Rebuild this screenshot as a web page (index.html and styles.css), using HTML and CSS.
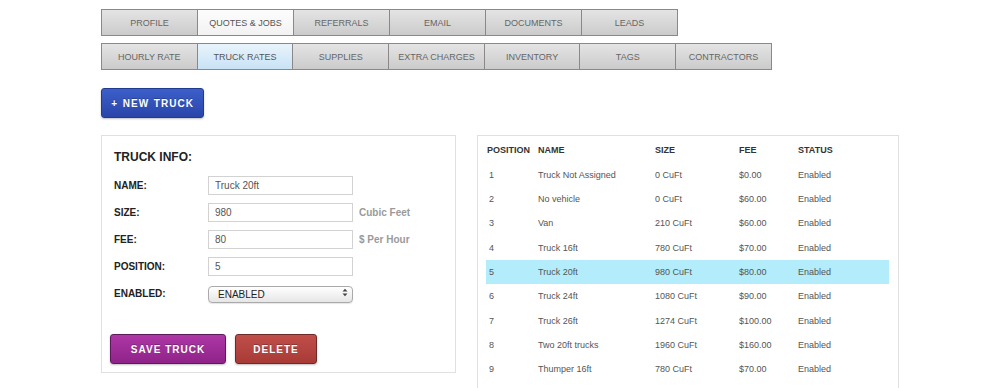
FILE: index.html
```html
<!DOCTYPE html>
<html lang="en">
<head>
    <meta charset="UTF-8">
    <title>Truck Rates</title>
    <link rel="stylesheet" href="styles.css">
</head>
<body>
    <div class="page">
        <!-- Main tabs -->
        <div class="tabs">
            <a class="tab">PROFILE</a>
            <a class="tab active">QUOTES &amp; JOBS</a>
            <a class="tab">REFERRALS</a>
            <a class="tab">EMAIL</a>
            <a class="tab">DOCUMENTS</a>
            <a class="tab">LEADS</a>
        </div>

        <!-- Sub tabs -->
        <div class="tabs sub-tabs">
            <a class="tab">HOURLY RATE</a>
            <a class="tab active">TRUCK RATES</a>
            <a class="tab">SUPPLIES</a>
            <a class="tab">EXTRA CHARGES</a>
            <a class="tab">INVENTORY</a>
            <a class="tab">TAGS</a>
            <a class="tab">CONTRACTORS</a>
        </div>

        <button class="btn btn-blue new-truck">+ NEW TRUCK</button>

        <div class="panels">
            <!-- Truck form -->
            <div class="panel form-panel">
                <h2>TRUCK INFO:</h2>
                <div class="form-row">
                    <label>NAME:</label>
                    <input type="text" value="Truck 20ft">
                </div>
                <div class="form-row">
                    <label>SIZE:</label>
                    <input type="text" value="980">
                    <span class="unit">Cubic Feet</span>
                </div>
                <div class="form-row">
                    <label>FEE:</label>
                    <input type="text" value="80">
                    <span class="unit">$ Per Hour</span>
                </div>
                <div class="form-row">
                    <label>POSITION:</label>
                    <input type="text" value="5">
                </div>
                <div class="form-row">
                    <label>ENABLED:</label>
                    <div class="select-wrap">
                        <select>
                            <option>ENABLED</option>
                            <option>DISABLED</option>
                        </select>
                        <svg class="select-arrows" width="6" height="9" viewBox="0 0 6 9">
                            <path d="M0.5 3.5 L3 0.8 L5.5 3.5 Z" fill="#444"/>
                            <path d="M0.5 5.5 L3 8.2 L5.5 5.5 Z" fill="#444"/>
                        </svg>
                    </div>
                </div>
                <div class="form-actions">
                    <button class="btn btn-purple save">SAVE TRUCK</button>
                    <button class="btn btn-red delete">DELETE</button>
                </div>
            </div>

            <!-- Truck list -->
            <div class="panel list-panel">
                <table class="trucks">
                    <thead>
                        <tr>
                            <th class="col-pos">POSITION</th>
                            <th class="col-name">NAME</th>
                            <th class="col-size">SIZE</th>
                            <th class="col-fee">FEE</th>
                            <th>STATUS</th>
                        </tr>
                    </thead>
                    <tbody>
                        <tr><td class="num">1</td><td>Truck Not Assigned</td><td>0 CuFt</td><td>$0.00</td><td>Enabled</td></tr>
                        <tr><td class="num">2</td><td>No vehicle</td><td>0 CuFt</td><td>$60.00</td><td>Enabled</td></tr>
                        <tr><td class="num">3</td><td>Van</td><td>210 CuFt</td><td>$60.00</td><td>Enabled</td></tr>
                        <tr><td class="num">4</td><td>Truck 16ft</td><td>780 CuFt</td><td>$70.00</td><td>Enabled</td></tr>
                        <tr class="selected"><td class="num">5</td><td>Truck 20ft</td><td>980 CuFt</td><td>$80.00</td><td>Enabled</td></tr>
                        <tr><td class="num">6</td><td>Truck 24ft</td><td>1080 CuFt</td><td>$90.00</td><td>Enabled</td></tr>
                        <tr><td class="num">7</td><td>Truck 26ft</td><td>1274 CuFt</td><td>$100.00</td><td>Enabled</td></tr>
                        <tr><td class="num">8</td><td>Two 20ft trucks</td><td>1960 CuFt</td><td>$160.00</td><td>Enabled</td></tr>
                        <tr><td class="num">9</td><td>Thumper 16ft</td><td>780 CuFt</td><td>$70.00</td><td>Enabled</td></tr>
                    </tbody>
                </table>
            </div>
        </div>
    </div>
</body>
</html>
```

FILE: styles.css
```css
body {
    margin: 0;
    font-family: 'Liberation Sans', Arial, sans-serif;
    background: #fff;
    color: #333;
}

.page {
    padding: 9px 0 0 101px;
}

/* Tabs */
.tabs {
    display: flex;
    border-left: 1px solid #8d8888;
}

.sub-tabs {
    margin-top: 7px;
}

.tab {
    width: 95px;
    height: 25px;
    display: flex;
    align-items: center;
    justify-content: center;
    border: 1px solid #8d8888;
    border-left: none;
    background: linear-gradient(#e4e4e4, #cbcbcb);
    color: #666;
    font-size: 9px;
    cursor: pointer;
}

.sub-tabs .tab {
    width: 94.7px;
}

.tab.active {
    background: linear-gradient(#fdfdfd, #f2f2f2);
    color: #555;
}

.sub-tabs .tab.active {
    background: linear-gradient(#e8f4fc, #c9e2f5);
}

/* Buttons */
.btn {
    display: block;
    height: 30px;
    border-radius: 3px;
    color: #fff;
    font-family: inherit;
    font-size: 10px;
    font-weight: bold;
    letter-spacing: 1px;
    text-shadow: 0 -1px 0 rgba(0, 0, 0, 0.25);
    box-shadow: 0 1px 2px rgba(0, 0, 0, 0.25);
    cursor: pointer;
}

.btn-blue {
    background: linear-gradient(#3c5fca, #2a45aa);
    border: 1px solid #223a8e;
}

.btn-purple {
    background: linear-gradient(#ad37a6, #8f2389);
    border: 1px solid #5f1a5b;
}

.btn-red {
    background: linear-gradient(#c04e49, #a83b37);
    border: 1px solid #6e2a28;
}

.new-truck {
    width: 103px;
    margin-top: 18px;
    word-spacing: 1px;
}

/* Panels */
.panels {
    display: flex;
    align-items: flex-start;
    gap: 21px;
    margin-top: 17px;
}

.panel {
    border: 1px solid #e0e0e0;
    background: #fff;
}

.form-panel {
    width: 329px;
    padding: 13px 12px 8px 12px;
}

.form-panel h2 {
    margin: 0 0 7px;
    font-size: 12px;
    line-height: 16px;
    color: #222;
}

.form-row {
    display: flex;
    align-items: center;
    height: 27px;
}

.form-row label {
    width: 94px;
    font-size: 10px;
    font-weight: bold;
    color: #222;
}

.form-row input {
    box-sizing: border-box;
    width: 145px;
    height: 19px;
    padding: 0 6px;
    border: 1px solid #d2d2d2;
    font-family: inherit;
    font-size: 10px;
    color: #555;
}

.unit {
    margin-left: 6px;
    font-size: 10px;
    font-weight: bold;
    color: #9a9a9a;
}

.select-wrap {
    position: relative;
    width: 145px;
}

.select-wrap select {
    appearance: none;
    -webkit-appearance: none;
    box-sizing: border-box;
    width: 145px;
    height: 17px;
    padding: 0 9px;
    border: 1px solid #aaa;
    border-radius: 4px;
    background: linear-gradient(#ffffff, #e6e6e6);
    font-family: inherit;
    font-size: 10px;
    color: #222;
    box-shadow: 0 1px 1px rgba(0, 0, 0, 0.1);
}

.select-arrows {
    position: absolute;
    right: 5px;
    top: 4px;
    pointer-events: none;
}

.form-actions {
    display: flex;
    gap: 9px;
    margin: 27px 0 0 -4px;
}

.save {
    width: 116px;
}

.delete {
    width: 82px;
}

/* Truck list */
.list-panel {
    width: 403px;
    padding: 2px 9px 20px 8px;
}

.trucks {
    width: 100%;
    border-collapse: collapse;
    font-size: 9px;
}

.trucks th,
.trucks td {
    height: 24.35px;
    padding: 0 0 0 1px;
    text-align: left;
}

.trucks th {
    font-weight: bold;
    color: #333;
}

.trucks td {
    color: #555;
}

.trucks td.num {
    padding-left: 3px;
}

.col-pos { width: 50px; }
.col-name { width: 116px; }
.col-size { width: 83px; }
.col-fee { width: 58px; }

.trucks tr.selected td {
    background: #b3ecfa;
}
```
